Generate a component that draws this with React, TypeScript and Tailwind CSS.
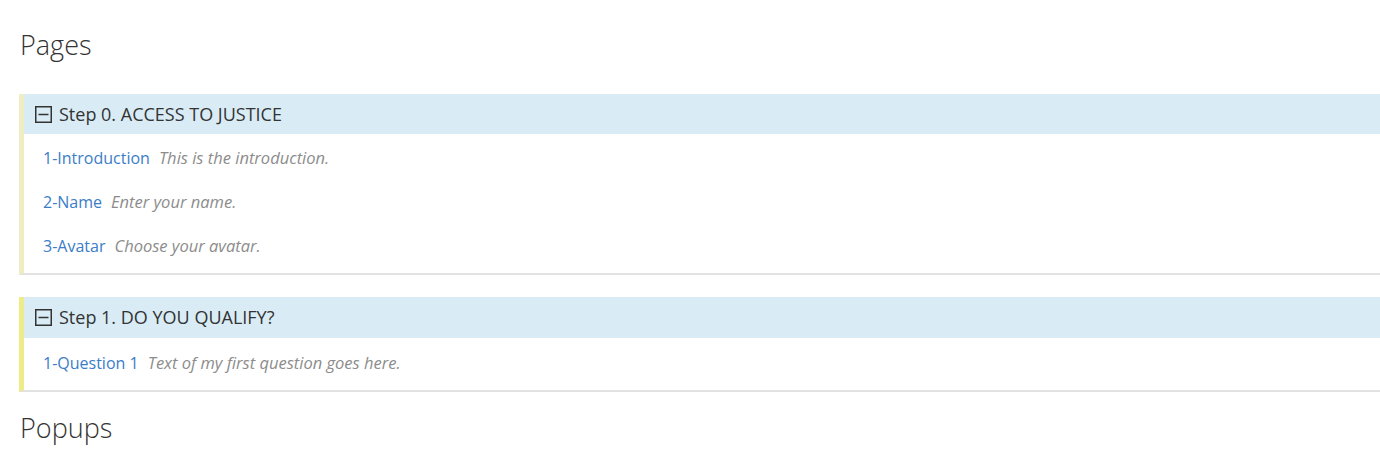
import React, { FC } from 'react'

type PageItem = { id: string; text: string }

type StepPanelProps = {
  title: string;
  items: PageItem[];
  accent: string;
  tall?: boolean;
}

const MinusBox: FC = () => (
  <svg width="17" height="17" viewBox="0 0 17 17" className="shrink-0">
    <rect x="0.75" y="0.75" width="15.5" height="15.5" fill="none" stroke="#333" strokeWidth="1.5" />
    <line x1="3.5" y1="8.5" x2="13.5" y2="8.5" stroke="#333" strokeWidth="1.5" />
  </svg>
)

const StepPanel: FC<StepPanelProps> = ({ title, items, accent, tall = false }) => {
  return (
    <div className={`ml-[19px] mr-[-40px] border-l-[5px] ${accent} border-b-2 border-b-[#e2e2e2] bg-white`}>
      <div className={`${tall ? 'h-[41px]' : 'h-10'} flex items-center gap-[7px] pl-[11px] bg-[#d9ecf6] text-[18px] text-[#333]`}>
        <MinusBox />
        <span>{title}</span>
      </div>
      <div className={`${tall ? 'pt-[3px] pb-[5px]' : 'pt-[2px] pb-[5px]'}`}>
        {items.map(item => (
          <div key={item.id} className="h-11 flex items-center pl-[19px] text-[16px]">
            <span className="text-[#3b7dc8]">{item.id}</span>
            <span className="ml-[9px] italic text-[#8c8c8c] text-[16.5px]">{item.text}</span>
          </div>
        ))}
      </div>
    </div>
  )
}

const App: FC = () => {
  return (
    <div className="w-[1380px] h-[474px] overflow-hidden bg-white font-['Open_Sans',sans-serif]">
      <h2 className="pl-5 pt-[27px] h-[94px] text-[27px] font-light text-[#333] leading-[36px]">Pages</h2>
      <StepPanel
        title="Step 0. ACCESS TO JUSTICE"
        accent="border-l-[#eeeec2]"
        items={[
          { id: '1-Introduction', text: 'This is the introduction.' },
          { id: '2-Name', text: 'Enter your name.' },
          { id: '3-Avatar', text: 'Choose your avatar.' },
        ]}
      />
      <div className="h-[22px]" />
      <StepPanel
        title="Step 1. DO YOU QUALIFY?"
        accent="border-l-[#eeec88]"
        tall
        items={[{ id: '1-Question 1', text: 'Text of my first question goes here.' }]}
      />
      <h2 className="pl-5 pt-[18px] text-[27px] font-light text-[#333] leading-[36px]">Popups</h2>
    </div>
  )
}

export default App
